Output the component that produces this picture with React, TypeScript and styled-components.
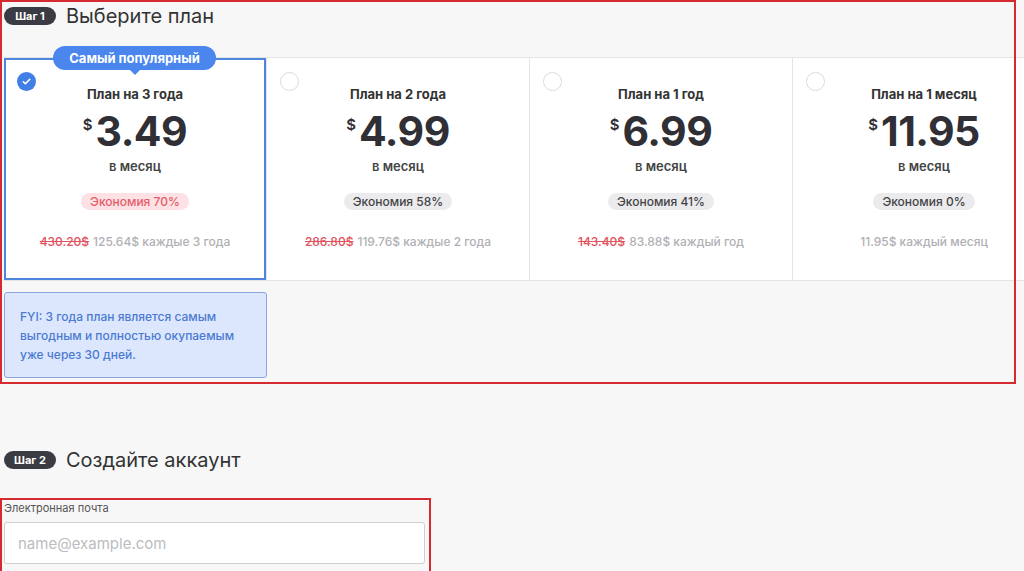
import React from "react";
import styled, { createGlobalStyle } from "styled-components";

const GlobalStyle = createGlobalStyle`
  html, body {
    margin: 0;
    padding: 0;
    background: #f7f7f8;
    font-family: Inter, "Noto Sans", Arial, sans-serif;
    overflow: hidden;
  }
  * { box-sizing: border-box; }
`;

const Page = styled.div`
  position: relative;
  width: 1024px;
  height: 571px;
  overflow: hidden;
`;

const StepHeader = styled.div<{ $top: number }>`
  display: flex;
  align-items: center;
  gap: 10px;
  padding-left: 4px;
  margin-top: ${(p) => p.$top}px;
  height: 18px;
`;

const StepBadge = styled.span`
  display: inline-flex;
  align-items: center;
  justify-content: center;
  height: 18px;
  width: 52px;
  border-radius: 9px;
  background: #3b3b43;
  color: #fff;
  font-size: 11px;
  font-weight: 700;
`;

const StepTitle = styled.h2`
  margin: 0;
  font-size: 20px;
  font-weight: 400;
  color: #333;
`;

const PlansRow = styled.div`
  display: flex;
  margin-top: 32px;
  margin-left: 4px;
  background: #fff;
  border-top: 1px solid #e4e4e6;
  border-bottom: 1px solid #e4e4e6;
  width: 1100px;
`;

const Card = styled.div<{ $selected?: boolean }>`
  position: relative;
  flex: 0 0 263px;
  height: 222px;
  border-right: 1px solid #e4e4e6;
  box-shadow: ${(p) => (p.$selected ? "inset 0 0 0 2px #4f86dd" : "none")};
  display: flex;
  flex-direction: column;
  align-items: center;
  padding-top: 28px;
`;

const Popular = styled.div`
  position: absolute;
  top: -12px;
  left: 49px;
  width: 163px;
  height: 24px;
  border-radius: 12px;
  background: #4a86ee;
  color: #fff;
  font-size: 13px;
  font-weight: 700;
  display: flex;
  align-items: center;
  justify-content: center;
  &::after {
    content: "";
    position: absolute;
    left: 76px;
    bottom: -5px;
    border-left: 6px solid transparent;
    border-right: 6px solid transparent;
    border-top: 6px solid #4a86ee;
  }
`;

const Radio = styled.span<{ $checked?: boolean }>`
  position: absolute;
  top: 14px;
  left: 13px;
  width: 19px;
  height: 19px;
  border-radius: 50%;
  border: ${(p) => (p.$checked ? "none" : "1px solid #dcdcdf")};
  background: ${(p) => (p.$checked ? "#3f7fe6" : "#fff")};
  display: flex;
  align-items: center;
  justify-content: center;
`;

const PlanName = styled.div`
  font-size: 13px;
  line-height: 16px;
  font-weight: 700;
  color: #333;
`;

const PriceRow = styled.div`
  display: flex;
  align-items: flex-start;
  margin-top: 7px;
  color: #2f2f35;
`;

const Currency = styled.span`
  font-size: 15px;
  font-weight: 600;
  margin-top: 6px;
  margin-right: 3px;
`;

const Amount = styled.span`
  font-size: 41px;
  line-height: 44px;
  font-weight: 700;
  letter-spacing: -0.5px;
`;

const PerMonth = styled.div`
  margin-top: 5px;
  font-size: 13px;
  line-height: 16px;
  font-weight: 600;
  color: #444;
`;

const Saving = styled.span<{ $hot?: boolean }>`
  margin-top: 19px;
  height: 17px;
  padding: 0 9px;
  border-radius: 9px;
  display: inline-flex;
  align-items: center;
  font-size: 12px;
  font-weight: 500;
  background: ${(p) => (p.$hot ? "#fde1e4" : "#ebebee")};
  color: ${(p) => (p.$hot ? "#e35d69" : "#444")};
`;

const Total = styled.div`
  margin-top: 24px;
  font-size: 12px;
  line-height: 16px;
  color: #b0b0b4;
  font-weight: 500;
`;

const OldPrice = styled.s`
  color: #e0535e;
  margin-right: 4px;
`;

const Note = styled.div`
  margin: 11px 0 0 4px;
  width: 263px;
  height: 86px;
  padding: 14px 15px;
  background: #dce7fd;
  border: 1px solid #8ca8da;
  border-radius: 3px;
  color: #4b7ad2;
  font-size: 12px;
  line-height: 19px;
  font-weight: 500;
`;

const Field = styled.div`
  margin: 32px 0 0 4px;
  width: 421px;
`;

const Label = styled.label`
  display: block;
  font-size: 11px;
  line-height: 14px;
  color: #555;
`;

const Input = styled.input`
  display: block;
  margin-top: 7px;
  width: 421px;
  height: 42px;
  padding: 0 13px;
  border: 1px solid #cfcfd2;
  border-radius: 3px;
  background: #fff;
  font-family: inherit;
  font-size: 15px;
  outline: none;
  &::placeholder { color: #bcbcc0; }
`;

const Annotation = styled.div<{ $l: number; $t: number; $w: number; $h: number }>`
  position: absolute;
  left: ${(p) => p.$l}px;
  top: ${(p) => p.$t}px;
  width: ${(p) => p.$w}px;
  height: ${(p) => p.$h}px;
  border: 2px solid #d42a30;
  pointer-events: none;
`;

const plans = [
  { name: "План на 3 года", price: "3.49", saving: "Экономия 70%", old: "430.20$", total: "125.64$ каждые 3 года", selected: true },
  { name: "План на 2 года", price: "4.99", saving: "Экономия 58%", old: "286.80$", total: "119.76$ каждые 2 года" },
  { name: "План на 1 год", price: "6.99", saving: "Экономия 41%", old: "143.40$", total: "83.88$ каждый год" },
  { name: "План на 1 месяц", price: "11.95", saving: "Экономия 0%", old: "", total: "11.95$ каждый месяц" },
];

const Check = () => (
  <svg width="11" height="11" viewBox="0 0 24 24" fill="none" stroke="#fff" strokeWidth="3.5" strokeLinecap="round" strokeLinejoin="round">
    <path d="M5 12.5l4.5 4.5L19 7.5" />
  </svg>
);

export default function App() {
  return (
    <Page>
      <GlobalStyle />
      <StepHeader $top={7}>
        <StepBadge>Шаг 1</StepBadge>
        <StepTitle>Выберите план</StepTitle>
      </StepHeader>

      <PlansRow>
        {plans.map((p) => (
          <Card key={p.name} $selected={p.selected}>
            {p.selected && <Popular>Самый популярный</Popular>}
            <Radio $checked={p.selected}>{p.selected && <Check />}</Radio>
            <PlanName>{p.name}</PlanName>
            <PriceRow>
              <Currency>$</Currency>
              <Amount>{p.price}</Amount>
            </PriceRow>
            <PerMonth>в месяц</PerMonth>
            <Saving $hot={p.selected}>{p.saving}</Saving>
            <Total>
              {p.old && <OldPrice>{p.old}</OldPrice>}
              {p.total}
            </Total>
          </Card>
        ))}
      </PlansRow>

      <Note>FYI: 3 года план является самым выгодным и полностью окупаемым уже через 30 дней.</Note>

      <StepHeader $top={73}>
        <StepBadge>Шаг 2</StepBadge>
        <StepTitle>Создайте аккаунт</StepTitle>
      </StepHeader>

      <Field>
        <Label>Электронная почта</Label>
        <Input placeholder="name@example.com" />
      </Field>

      <Annotation $l={0} $t={0} $w={1016} $h={384} />
      <Annotation $l={0} $t={498} $w={431} $h={80} />
    </Page>
  );
}
